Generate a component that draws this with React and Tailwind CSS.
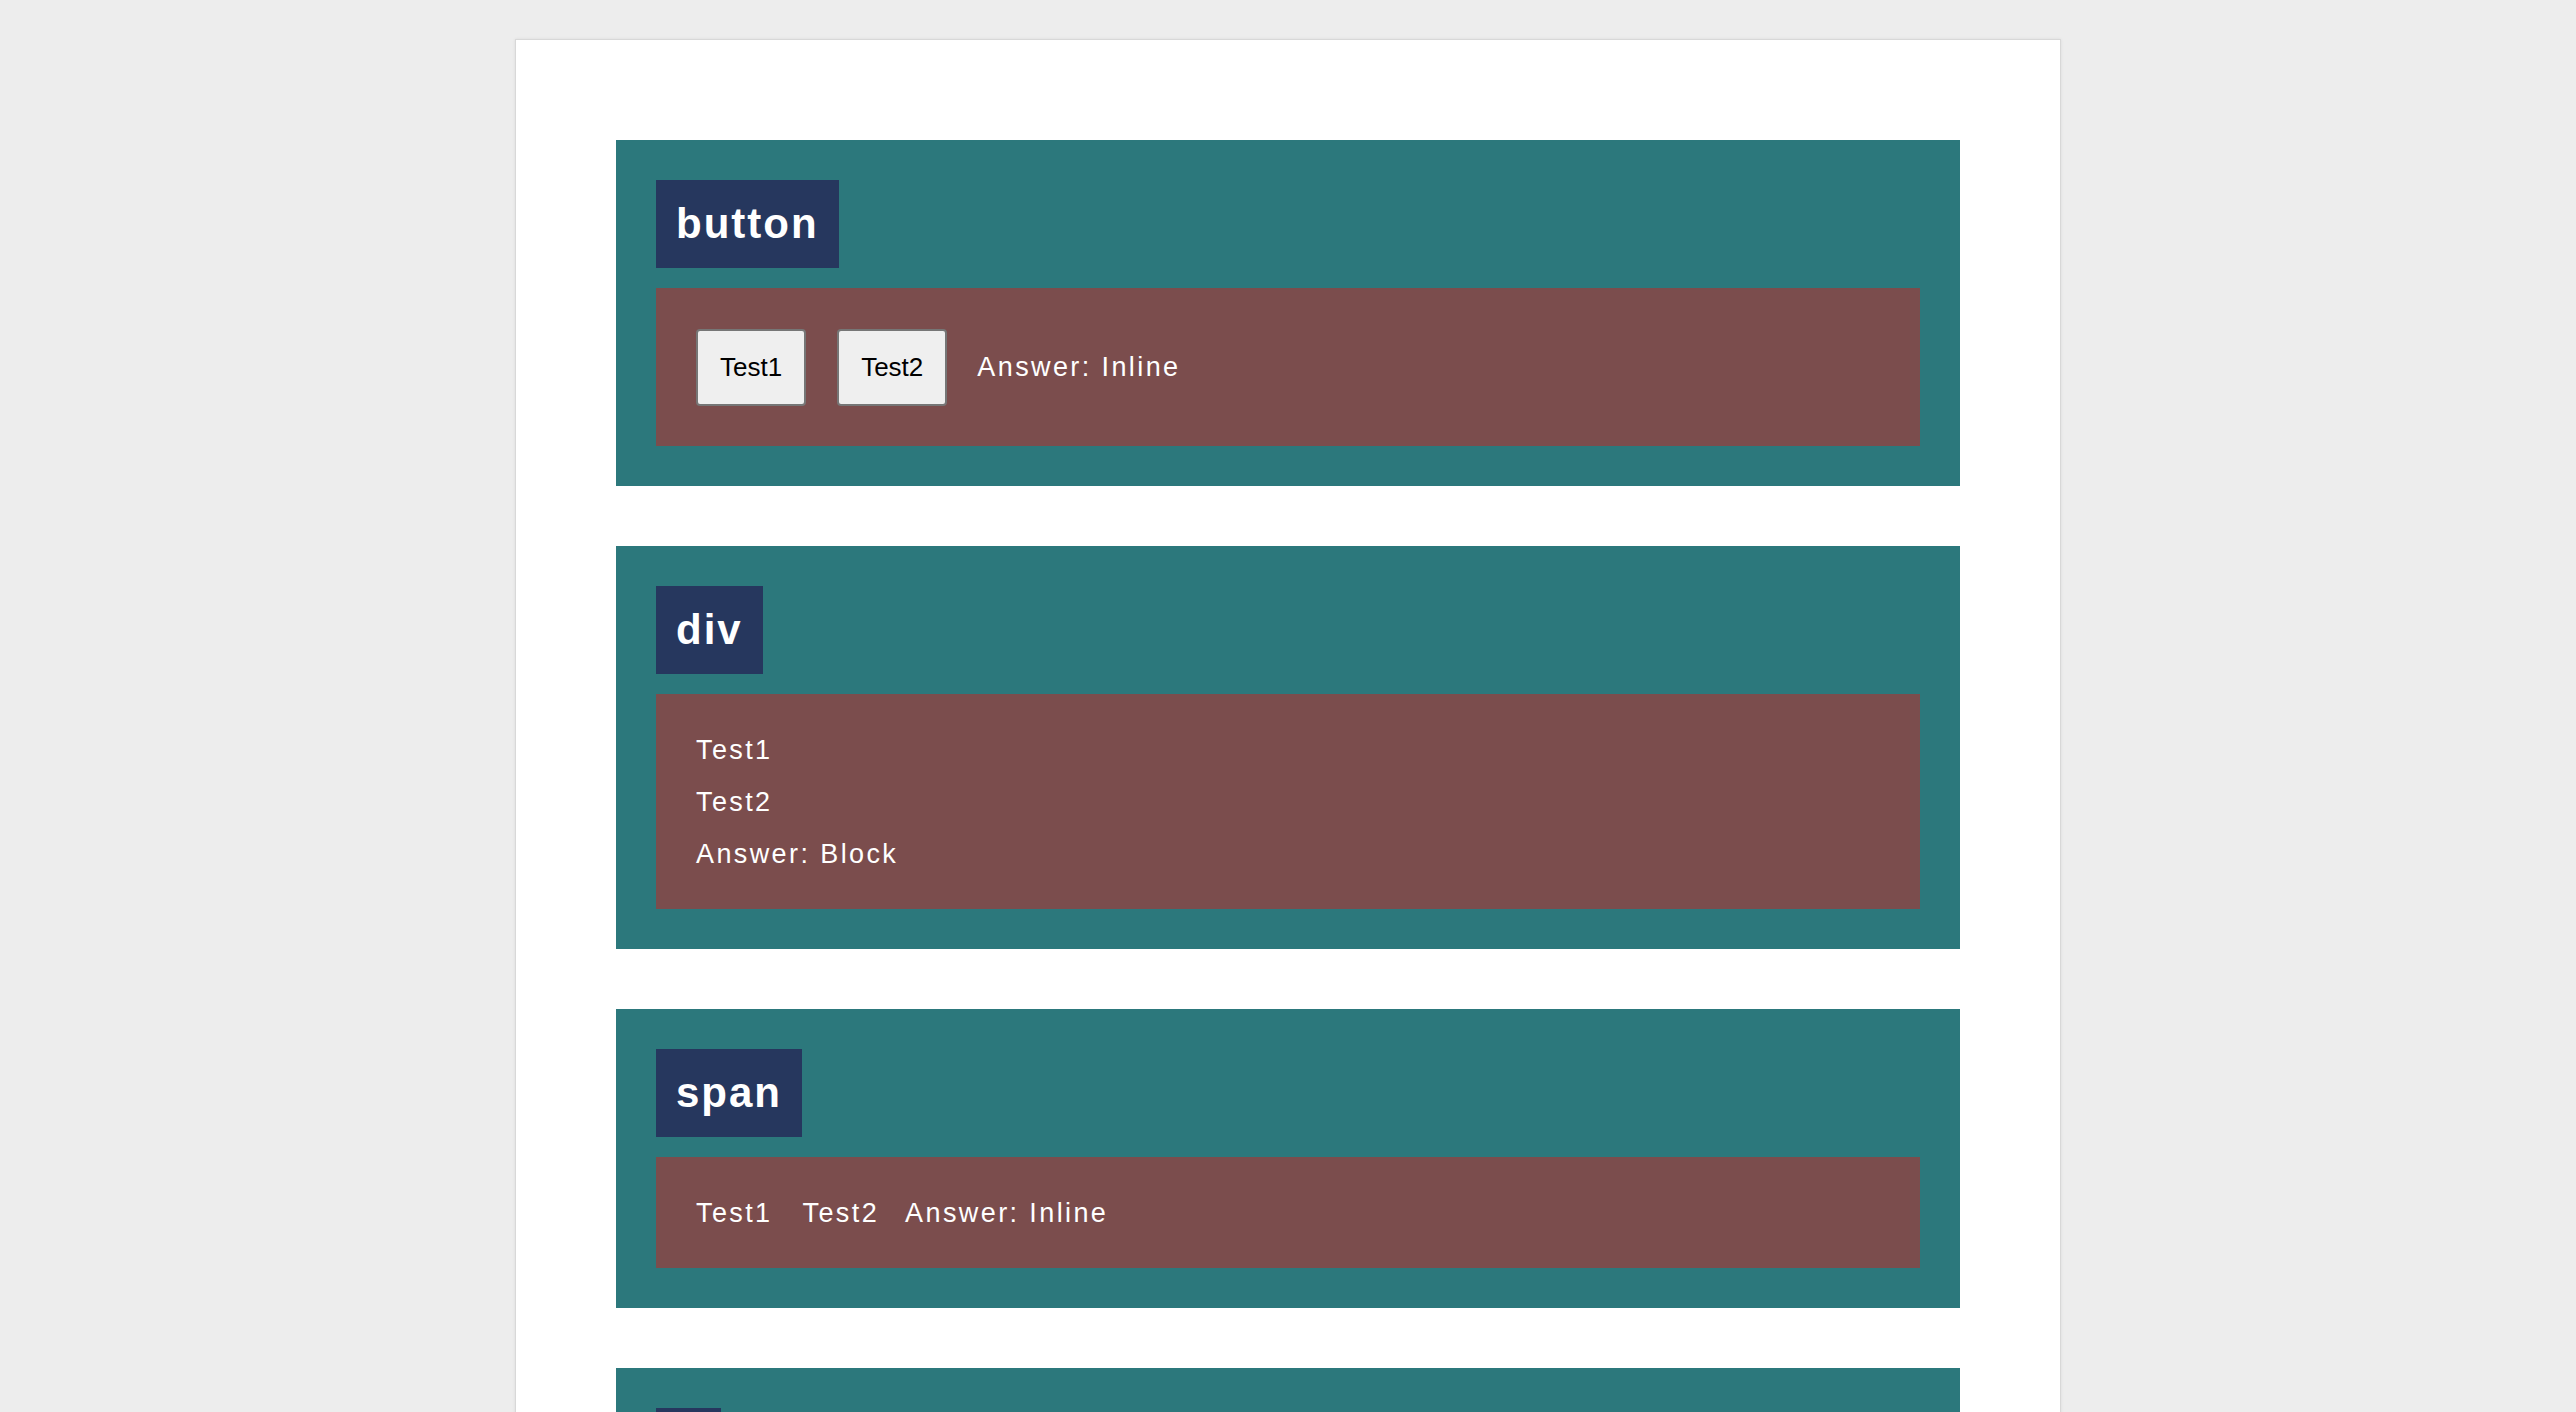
const labelClass = "bg-[#26375e] p-[20px] text-[42px] font-bold leading-[normal] tracking-[2px] text-white";
const boxClass = "self-stretch mt-[20px] bg-[#7b4d4d] px-[40px] text-[27px] leading-[normal] tracking-[2.4px] text-white";
const btnClass = "flex h-[77px] items-center rounded-[4px] border-2 border-[#767676] bg-[#efefef] px-[22px] text-[26px] leading-[normal] tracking-normal text-black";

function Section({ label, children }) {
  return (
    <section className="flex flex-col items-start bg-[#2c787c] p-[40px]">
      <h2 className={labelClass}>{label}</h2>
      {children}
    </section>
  );
}

export default function App() {
  return (
    <div className="min-h-screen bg-[#ededed] pt-[39px] font-['Liberation_Sans',Arial,sans-serif]">
      <div className="mx-auto flex w-[1546px] flex-col gap-[60px] border border-[#d8d8d8] bg-white px-[100px] pt-[100px] pb-[100px] shadow-[0_0_3px_rgba(0,0,0,0.08)]">
        <Section label="button">
          <div className={`${boxClass} flex h-[158px] items-center`}>
            <button className={btnClass}>Test1</button>
            <button className={`${btnClass} ml-[31px]`}>Test2</button>
            <span className="ml-[30px]">Answer: Inline</span>
          </div>
        </Section>

        <Section label="div">
          <div className={`${boxClass} flex flex-col gap-[21px] pt-[41px] pb-[39px]`}>
            <div>Test1</div>
            <div>Test2</div>
            <div>Answer: Block</div>
          </div>
        </Section>

        <Section label="span">
          <div className={`${boxClass} flex pt-[41px] pb-[39px]`}>
            <span>Test1</span>
            <span className="ml-[30px]">Test2</span>
            <span className="ml-[26px]">Answer: Inline</span>
          </div>
        </Section>

        <Section label="a">
          <div className={`${boxClass} flex pt-[41px] pb-[39px]`}>
            <a>Test1</a>
            <a className="ml-[30px]">Test2</a>
            <span className="ml-[26px]">Answer: Inline</span>
          </div>
        </Section>
      </div>
    </div>
  );
}
